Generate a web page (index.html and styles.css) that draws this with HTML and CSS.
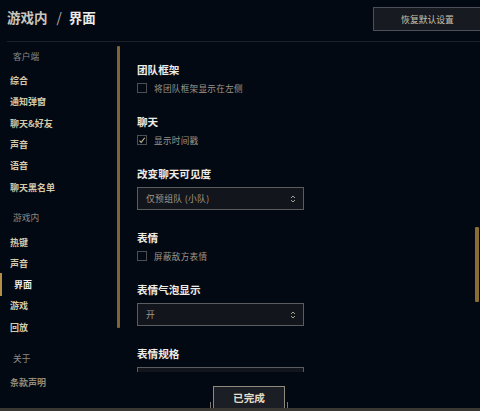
FILE: index.html
```html
<!DOCTYPE html>
<html lang="zh">
<head>
<meta charset="utf-8">
<link rel="stylesheet" href="styles.css">
</head>
<body>
<div class="app">
  <header class="header">
    <h1 class="title"><span class="crumb">游戏内</span><span class="sep">/</span><span class="current">界面</span></h1>
    <button class="reset">恢复默认设置</button>
  </header>
  <div class="main">
    <nav class="nav">
      <div class="nav-list">
        <div class="nav-head">客户端</div>
        <div class="nav-item">综合</div>
        <div class="nav-item">通知弹窗</div>
        <div class="nav-item">聊天&amp;好友</div>
        <div class="nav-item">声音</div>
        <div class="nav-item">语音</div>
        <div class="nav-item">聊天黑名单</div>
        <div class="nav-head gap">游戏内</div>
        <div class="nav-item">热键</div>
        <div class="nav-item">声音</div>
        <div class="nav-item active">界面</div>
        <div class="nav-item">游戏</div>
        <div class="nav-item">回放</div>
        <div class="nav-head gap">关于</div>
        <div class="nav-item dim">条款声明</div>
      </div>
      <div class="track left-track"><div class="thumb left-thumb"></div></div>
    </nav>
    <section class="content">
      <div class="pane">
        <div class="scroll">
          <div class="group">
            <h2 class="heading">团队框架</h2>
            <label class="check"><span class="box"></span><span class="label">将团队框架显示在左侧</span></label>
          </div>
          <div class="group">
            <h2 class="heading">聊天</h2>
            <label class="check"><span class="box checked"><svg viewBox="0 0 10 10" width="9" height="9"><path d="M1.8 5.2 L4 7.4 L8.4 1.6" fill="none" stroke="#c8bb95" stroke-width="1.3"/></svg></span><span class="label">显示时间戳</span></label>
          </div>
          <div class="group">
            <h2 class="heading">改变聊天可见度</h2>
            <div class="select"><span class="value">仅预组队 (小队)</span><svg class="arrows" viewBox="0 0 8 12" width="8" height="12"><path d="M2 5 L4 3 L6 5 M2 7 L4 9 L6 7" fill="none" stroke="#a9a190" stroke-width="1"/></svg></div>
          </div>
          <div class="group">
            <h2 class="heading">表情</h2>
            <label class="check"><span class="box"></span><span class="label">屏蔽敌方表情</span></label>
          </div>
          <div class="group">
            <h2 class="heading">表情气泡显示</h2>
            <div class="select"><span class="value">开</span><svg class="arrows" viewBox="0 0 8 12" width="8" height="12"><path d="M2 5 L4 3 L6 5 M2 7 L4 9 L6 7" fill="none" stroke="#a9a190" stroke-width="1"/></svg></div>
          </div>
          <div class="group">
            <h2 class="heading">表情规格</h2>
            <div class="select"></div>
          </div>
        </div>
        <div class="track right-track"><div class="thumb right-thumb"></div></div>
      </div>
      <footer class="footer">
        <span class="tick"></span>
        <button class="done">已完成</button>
        <span class="tick"></span>
      </footer>
    </section>
  </div>
</div>
</body>
</html>
```

FILE: styles.css
```css
* { box-sizing: border-box; margin: 0; padding: 0; }
html, body { width: 480px; height: 411px; overflow: hidden; }
body {
  background: #030913;
  font-family: "Noto Sans CJK SC", "Noto Sans", sans-serif;
  color: #cdc4a8;
}
.app { display: flex; flex-direction: column; height: 411px; }

.header {
  display: flex;
  align-items: flex-start;
  height: 42px;
  flex: none;
  margin-left: 7px;
  border-bottom: 1px solid #1b2028;
}
.title {
  font-size: 13.5px;
  font-weight: 700;
  line-height: 18px;
  margin-top: 8px;
  color: #c9c6bd;
  display: flex;
}
.title .sep { margin: 0 7px 0 9px; font-weight: 400; color: #b8b5ac; }
.title .current { color: #ecebe6; }
.reset {
  margin-left: auto;
  margin-top: 7px;
  margin-right: -6px;
  width: 113px;
  height: 24px;
  background: #171a21;
  border: 1px solid #4d5058;
  color: #c9c1aa;
  font-family: inherit;
  font-size: 8.8px;
  padding-right: 4px;
}

.main {
  display: flex;
  flex: 1;
  border-bottom: 3px solid #3a3833;
  overflow: hidden;
}
.nav { display: flex; width: 121px; flex: none; }
.nav-list {
  width: 117px;
  display: flex;
  flex-direction: column;
  padding-top: 8px;
}
.nav-head {
  font-size: 8.7px;
  color: #8a8a88;
  line-height: 14px;
  height: 14px;
  padding-left: 13px;
  margin-bottom: 6.4px;
}
.nav-head.gap { margin-top: 13.3px; }
.nav-item {
  font-size: 9px;
  font-weight: 700;
  color: #d3caab;
  line-height: 14px;
  height: 21.3px;
  flex: none;
  padding-left: 10px;
  display: flex;
  align-items: center;
  position: relative;
}
.nav-item.active { color: #f1efe8; padding-left: 14px; }
.nav-item.active::before {
  content: "";
  position: absolute;
  left: 0; top: -1px;
  width: 2px; height: 23px;
  background: #b58f45;
}
.nav-item.dim { color: #928c78; }

.track { width: 3px; flex: none; }
.thumb { width: 3px; background: #7d6535; border-radius: 1px; }
.left-thumb { margin-top: 4px; height: 282px; }

.content { flex: 1; display: flex; flex-direction: column; }
.pane { height: 330px; flex: none; display: flex; overflow: hidden; }
.scroll {
  flex: 1;
  padding-left: 16px;
  padding-top: 21px;
  display: flex;
  flex-direction: column;
  gap: 21px;
}
.heading {
  font-size: 10.6px;
  font-weight: 700;
  color: #eeece6;
  line-height: 14px;
  height: 14px;
}
.check {
  display: flex;
  align-items: center;
  height: 12px;
  margin-top: 5px;
}
.box {
  width: 10px; height: 10px;
  border: 1px solid #4d4f52;
  display: flex; align-items: center; justify-content: center;
}
.label {
  margin-left: 7px;
  font-size: 8.6px;
  color: #9c978a;
  letter-spacing: 0.3px;
}
.select {
  margin-top: 6px;
  width: 167px;
  height: 23px;
  border: 1px solid #5b5c5e;
  background: #12151b;
  display: flex;
  align-items: center;
  padding-left: 8px;
  padding-right: 6px;
}
.select .value { font-size: 8.8px; color: #a09b8d; letter-spacing: 0.3px; }
.select .arrows { margin-left: auto; }

.right-track { margin-left: auto; width: 4px; margin-right: 1px; }
.right-thumb { margin-top: 185px; height: 75px; width: 4px; background: #8a6c35; }

.footer {
  flex: 1;
  display: flex;
  align-items: flex-end;
  padding-left: 89px;
}
.tick { width: 1px; height: 6px; background: #7c776a; }
.done {
  width: 72px;
  height: 22px;
  margin: 0 2px;
  background: #1b1e25;
  border: 1px solid #8e8a7c;
  border-bottom: none;
  color: #e3dcc6;
  font-family: inherit;
  font-size: 10.6px;
  font-weight: 700;
}
```
